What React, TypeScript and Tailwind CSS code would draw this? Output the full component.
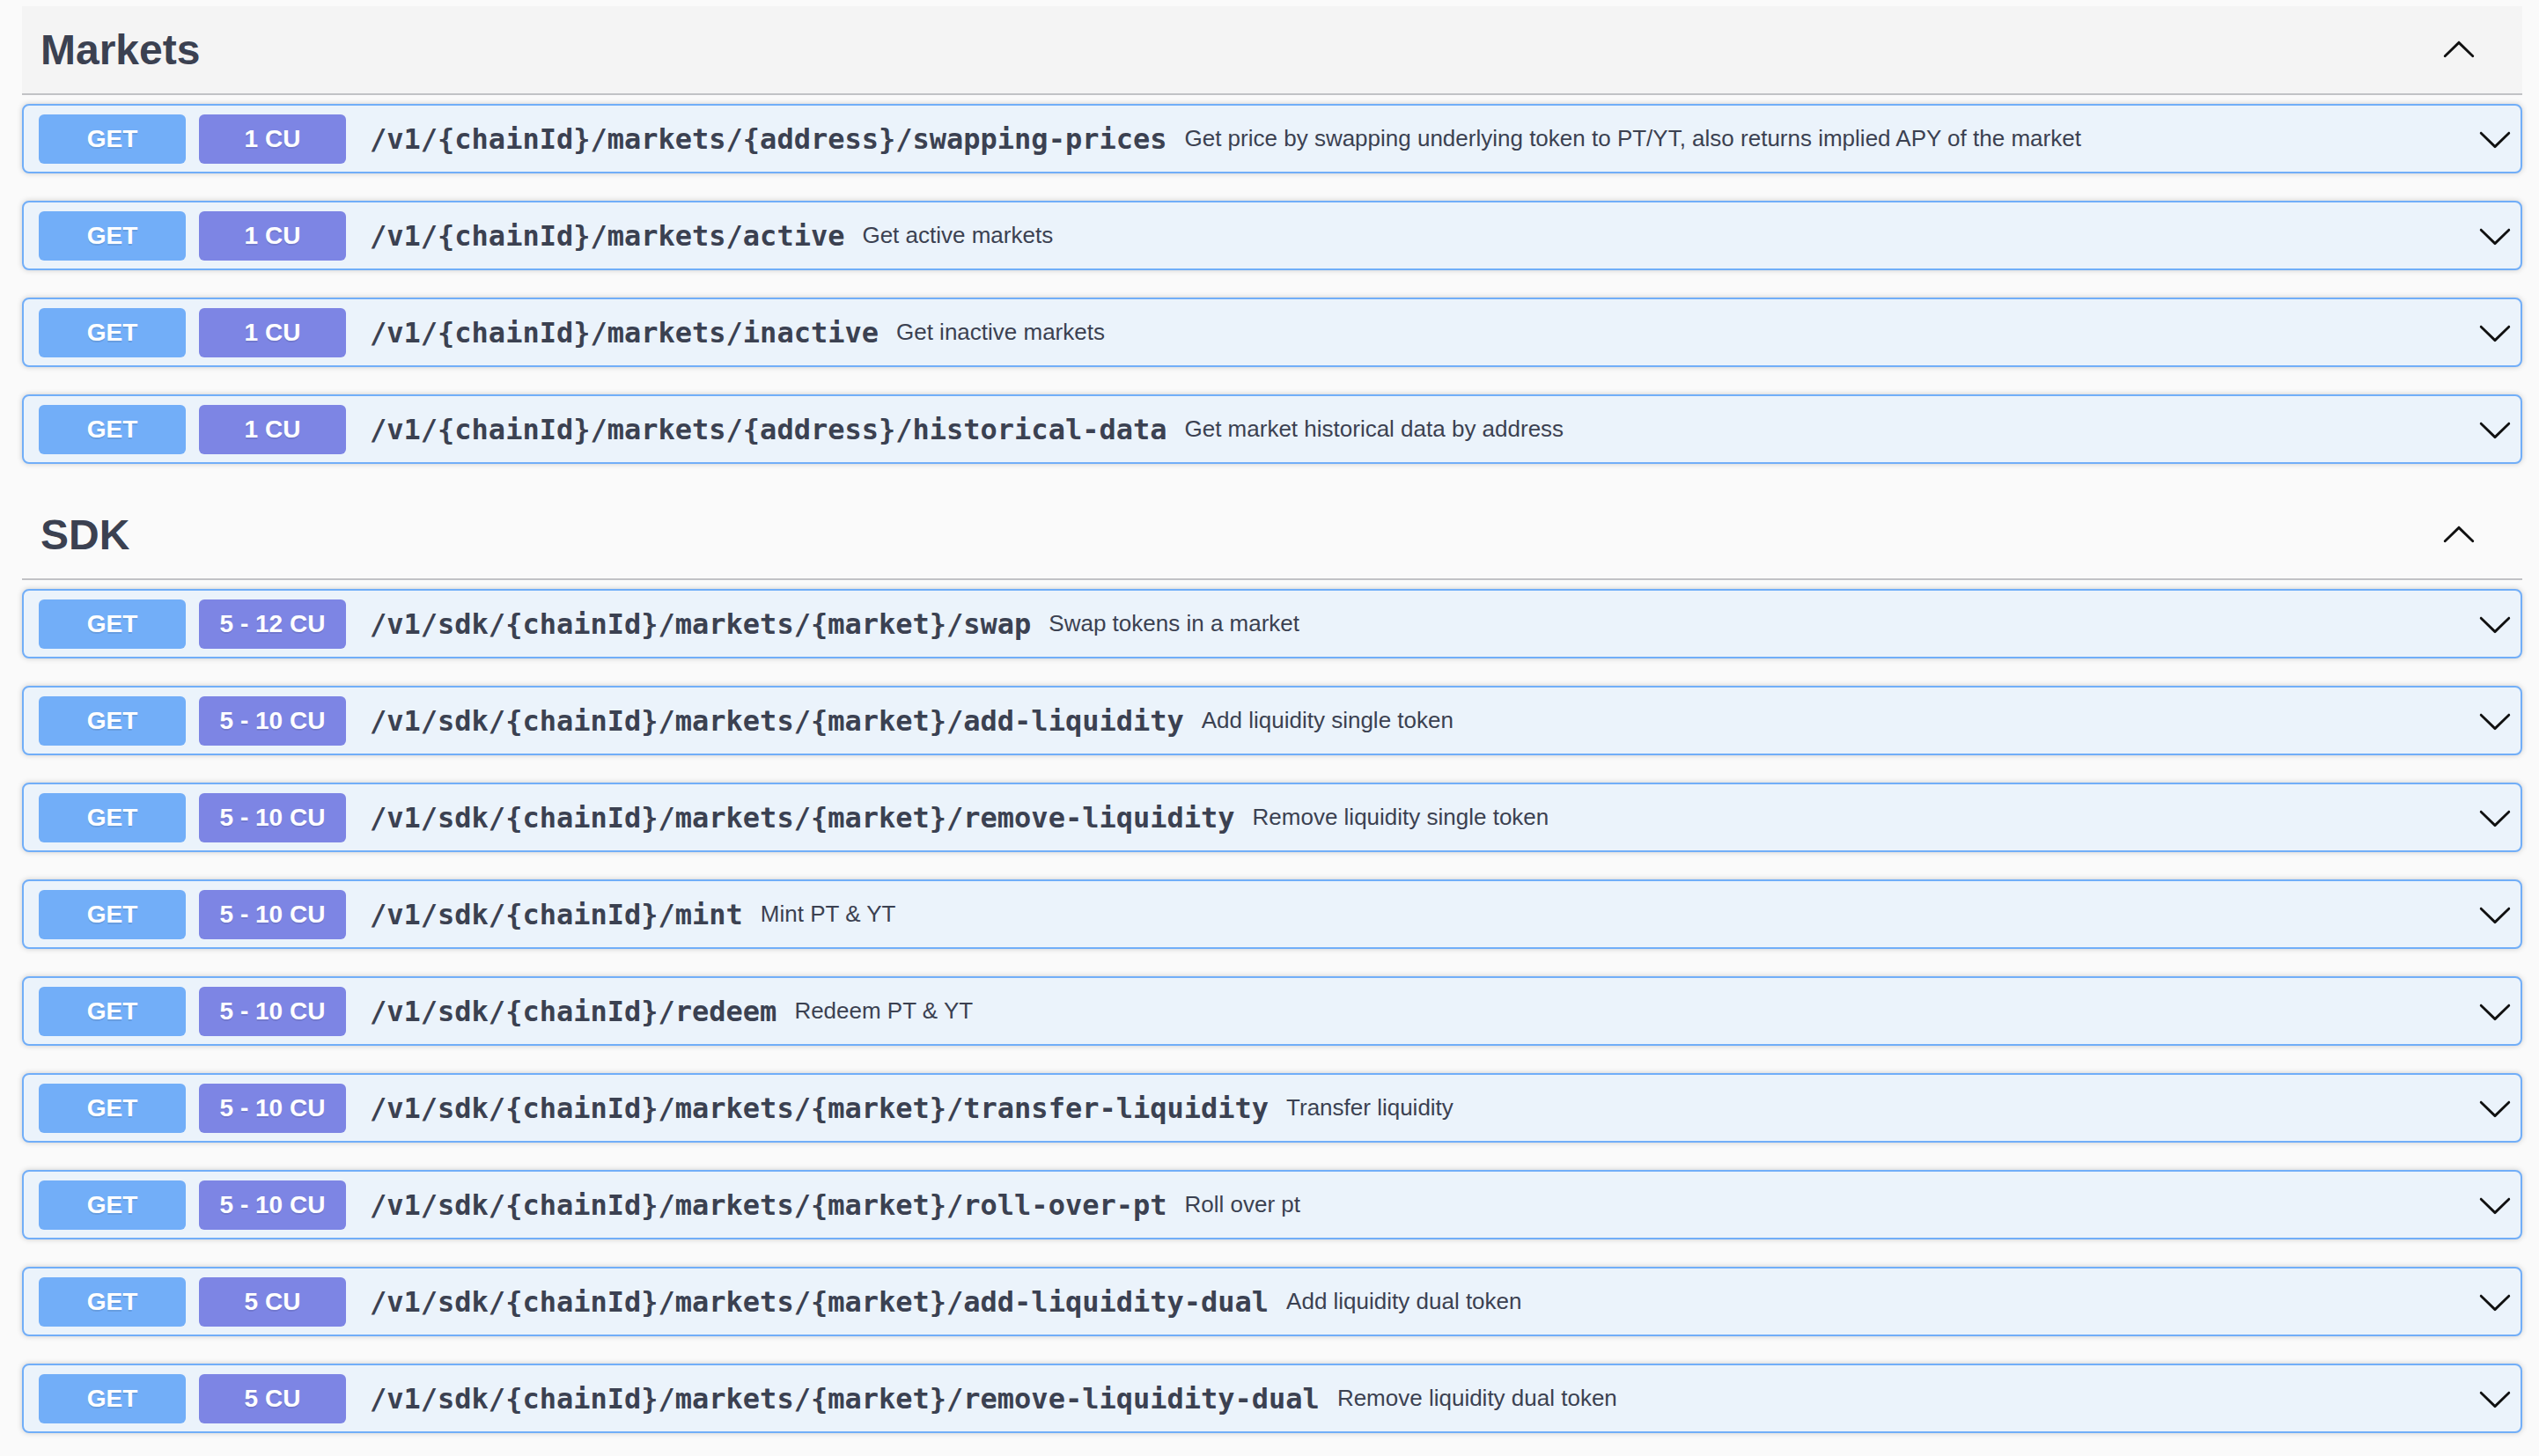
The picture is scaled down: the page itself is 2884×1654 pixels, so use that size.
type Op = { cu: string; path: string; desc: string };

const markets: Op[] = [
  {
    cu: "1 CU",
    path: "/v1/{chainId}/markets/{address}/swapping-prices",
    desc: "Get price by swapping underlying token to PT/YT, also returns implied APY of the market",
  },
  { cu: "1 CU", path: "/v1/{chainId}/markets/active", desc: "Get active markets" },
  { cu: "1 CU", path: "/v1/{chainId}/markets/inactive", desc: "Get inactive markets" },
  {
    cu: "1 CU",
    path: "/v1/{chainId}/markets/{address}/historical-data",
    desc: "Get market historical data by address",
  },
];

const sdk: Op[] = [
  { cu: "5 - 12 CU", path: "/v1/sdk/{chainId}/markets/{market}/swap", desc: "Swap tokens in a market" },
  {
    cu: "5 - 10 CU",
    path: "/v1/sdk/{chainId}/markets/{market}/add-liquidity",
    desc: "Add liquidity single token",
  },
  {
    cu: "5 - 10 CU",
    path: "/v1/sdk/{chainId}/markets/{market}/remove-liquidity",
    desc: "Remove liquidity single token",
  },
  { cu: "5 - 10 CU", path: "/v1/sdk/{chainId}/mint", desc: "Mint PT & YT" },
  { cu: "5 - 10 CU", path: "/v1/sdk/{chainId}/redeem", desc: "Redeem PT & YT" },
  {
    cu: "5 - 10 CU",
    path: "/v1/sdk/{chainId}/markets/{market}/transfer-liquidity",
    desc: "Transfer liquidity",
  },
  { cu: "5 - 10 CU", path: "/v1/sdk/{chainId}/markets/{market}/roll-over-pt", desc: "Roll over pt" },
  {
    cu: "5 CU",
    path: "/v1/sdk/{chainId}/markets/{market}/add-liquidity-dual",
    desc: "Add liquidity dual token",
  },
  {
    cu: "5 CU",
    path: "/v1/sdk/{chainId}/markets/{market}/remove-liquidity-dual",
    desc: "Remove liquidity dual token",
  },
];

// swagger's arrow, drawn at 40px
function Arrow({ up }: { up?: boolean }) {
  return (
    <svg
      viewBox="0 0 20 20"
      className={up ? "h-[40px] w-[40px] rotate-180 shrink-0" : "h-[40px] w-[40px] shrink-0"}
      fill="#111"
    >
      <path d="M17.418 6.109c.272-.268.709-.268.979 0s.271.701 0 .969l-7.908 7.83c-.27.268-.707.268-.979 0l-7.908-7.83c-.27-.268-.27-.701 0-.969.271-.268.709-.268.979 0L10 13.25l7.418-7.141z" />
    </svg>
  );
}

function Row({ op }: { op: Op }) {
  return (
    <div className="mb-[31px] flex h-[79px] items-center rounded-[8px] border-2 border-[#71aef8] bg-[#ebf3fb] pl-[17px] pr-[9px] shadow-[0_0_6px_rgba(0,0,0,0.19)]">
      <div className="flex h-[56px] w-[167px] shrink-0 items-center justify-center rounded-[6px] bg-[#72aef8] text-[28px] font-bold text-white [text-shadow:0_2px_0_rgba(0,0,0,0.1)]">
        GET
      </div>
      <div className="ml-[15px] flex h-[56px] w-[167px] shrink-0 items-center justify-center rounded-[6px] bg-[#7d85e4] text-[28px] font-bold text-white [text-shadow:0_2px_0_rgba(0,0,0,0.1)]">
        {op.cu}
      </div>
      <span className="pl-[27px] pr-[20px] font-['DejaVu_Sans_Mono',monospace] text-[32px] font-bold text-[#3b4151]">
        {op.path}
      </span>
      <span className="flex-1 text-[26px] text-[#3b4151]">{op.desc}</span>
      <Arrow />
    </div>
  );
}

function Section({ title, ops, hover }: { title: string; ops: Op[]; hover?: boolean }) {
  return (
    <div>
      <div
        className={
          hover
            ? "flex h-[101px] items-center border-b-2 border-[#c1c2c5] bg-[#f4f4f4] pl-[21px] pr-[52px]"
            : "flex h-[101px] items-center border-b-2 border-[#c1c2c5] pl-[21px] pr-[52px]"
        }
      >
        <h3 className="flex-1 text-[48px] font-bold text-[#3b4151]">{title}</h3>
        <Arrow up />
      </div>
      <div className="pt-[10px]">
        {ops.map((op) => (
          <Row key={op.path} op={op} />
        ))}
      </div>
    </div>
  );
}

export default function App() {
  return (
    <div className="min-h-screen bg-[#fafafa] pl-[25px] pr-[19px] pt-[7px] font-['Liberation_Sans',Arial,sans-serif]">
      <Section title="Markets" ops={markets} hover />
      <Section title="SDK" ops={sdk} />
    </div>
  );
}
